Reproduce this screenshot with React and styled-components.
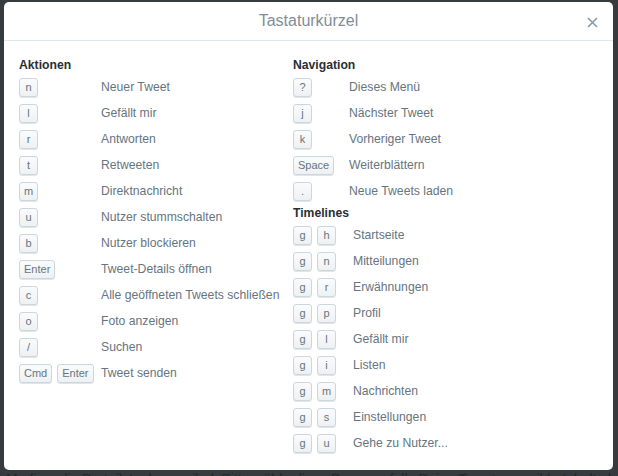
import styled, { createGlobalStyle } from "styled-components";

const GlobalStyle = createGlobalStyle`
  html, body {
    margin: 0;
    padding: 0;
    background: #353b3f;
    font-family: "Liberation Sans", Arial, sans-serif;
    overflow: hidden;
  }
`;

const sections = {
  left: [
    {
      title: "Aktionen",
      keyWidth: 82,
      rows: [
        [["n"], "Neuer Tweet"],
        [["l"], "Gefällt mir"],
        [["r"], "Antworten"],
        [["t"], "Retweeten"],
        [["m"], "Direktnachricht"],
        [["u"], "Nutzer stummschalten"],
        [["b"], "Nutzer blockieren"],
        [["Enter"], "Tweet-Details öffnen"],
        [["c"], "Alle geöffneten Tweets schließen"],
        [["o"], "Foto anzeigen"],
        [["/"], "Suchen"],
        [["Cmd", "Enter"], "Tweet senden"],
      ],
    },
  ],
  right: [
    {
      title: "Navigation",
      keyWidth: 56,
      rows: [
        [["?"], "Dieses Menü"],
        [["j"], "Nächster Tweet"],
        [["k"], "Vorheriger Tweet"],
        [["Space"], "Weiterblättern"],
        [["."], "Neue Tweets laden"],
      ],
    },
    {
      title: "Timelines",
      keyWidth: 60,
      rows: [
        [["g", "h"], "Startseite"],
        [["g", "n"], "Mitteilungen"],
        [["g", "r"], "Erwähnungen"],
        [["g", "p"], "Profil"],
        [["g", "l"], "Gefällt mir"],
        [["g", "i"], "Listen"],
        [["g", "m"], "Nachrichten"],
        [["g", "s"], "Einstellungen"],
        [["g", "u"], "Gehe zu Nutzer..."],
      ],
    },
  ],
};

const Page = styled.div`
  display: flex;
  flex-direction: column;
  height: 476px;
`;

const Modal = styled.div`
  margin: 2px 5px 0 4px;
  height: 468px;
  background: #fff;
  border-radius: 5px;
  display: flex;
  flex-direction: column;
  flex-shrink: 0;
`;

const Header = styled.div`
  position: relative;
  height: 38px;
  border-bottom: 1px solid #e1e8ed;
  display: flex;
  align-items: center;
  justify-content: center;
`;

const Title = styled.h3`
  margin: 0;
  font-size: 16px;
  font-weight: normal;
  color: #7f8d98;
`;

const Close = styled.button`
  position: absolute;
  right: 14px;
  top: 13px;
  width: 14px;
  height: 14px;
  padding: 0;
  border: 0;
  background: none;
  display: flex;
  align-items: center;
  justify-content: center;
`;

const Body = styled.div`
  display: grid;
  grid-template-columns: 274px 1fr;
  padding: 15px 15px 0 15px;
`;

const Column = styled.div`
  display: flex;
  flex-direction: column;
`;

const Heading = styled.h4`
  margin: 0;
  height: 18px;
  line-height: 18px;
  font-size: 12.2px;
  font-weight: bold;
  color: #292f33;
`;

const Row = styled.div`
  display: grid;
  grid-template-columns: ${(p) => p.$keyWidth}px 1fr;
  align-items: center;
  height: 26px;
`;

const Keys = styled.div`
  display: flex;
  gap: 5px;
`;

const Key = styled.kbd`
  box-sizing: border-box;
  min-width: 19px;
  height: 19px;
  padding: 0 4px;
  display: inline-flex;
  align-items: center;
  justify-content: center;
  font-family: "Liberation Sans", Arial, sans-serif;
  font-size: 11px;
  color: #66757f;
  background: linear-gradient(#fafbfc, #eef1f3);
  border: 1px solid #ccd6dd;
  border-radius: 3px;
  box-shadow: 0 1px 0 #dfe5e9;
`;

const Desc = styled.span`
  font-size: 12.2px;
  color: #66757f;
  white-space: nowrap;
`;

const Behind = styled.div`
  margin-top: 1px;
  padding-left: 6px;
  font-size: 14px;
  line-height: 16px;
  color: #24292c;
  white-space: nowrap;
  overflow: hidden;
`;

function Section({ title, keyWidth, rows }) {
  return (
    <>
      <Heading>{title}</Heading>
      {rows.map(([keys, label]) => (
        <Row key={label + keys.join("")} $keyWidth={keyWidth}>
          <Keys>
            {keys.map((k, i) => (
              <Key key={i}>{k}</Key>
            ))}
          </Keys>
          <Desc>{label}</Desc>
        </Row>
      ))}
    </>
  );
}

export default function App() {
  return (
    <Page>
      <GlobalStyle />
      <Modal>
        <Header>
          <Title>Tastaturkürzel</Title>
          <Close aria-label="Schließen">
            <svg width="11" height="11" viewBox="0 0 11 11">
              <path d="M1 1L10 10M10 1L1 10" stroke="#8899a6" strokeWidth="1.6" fill="none" />
            </svg>
          </Close>
        </Header>
        <Body>
          <Column>
            {sections.left.map((s) => (
              <Section key={s.title} {...s} />
            ))}
          </Column>
          <Column>
            {sections.right.map((s) => (
              <Section key={s.title} {...s} />
            ))}
          </Column>
        </Body>
      </Modal>
      <Behind>
        Medien, die Du teilst, als sensibel. Bitte wähle diese Box aus, falls Deine Tweets sensible Inhalte beinhalten, um
      </Behind>
    </Page>
  );
}
